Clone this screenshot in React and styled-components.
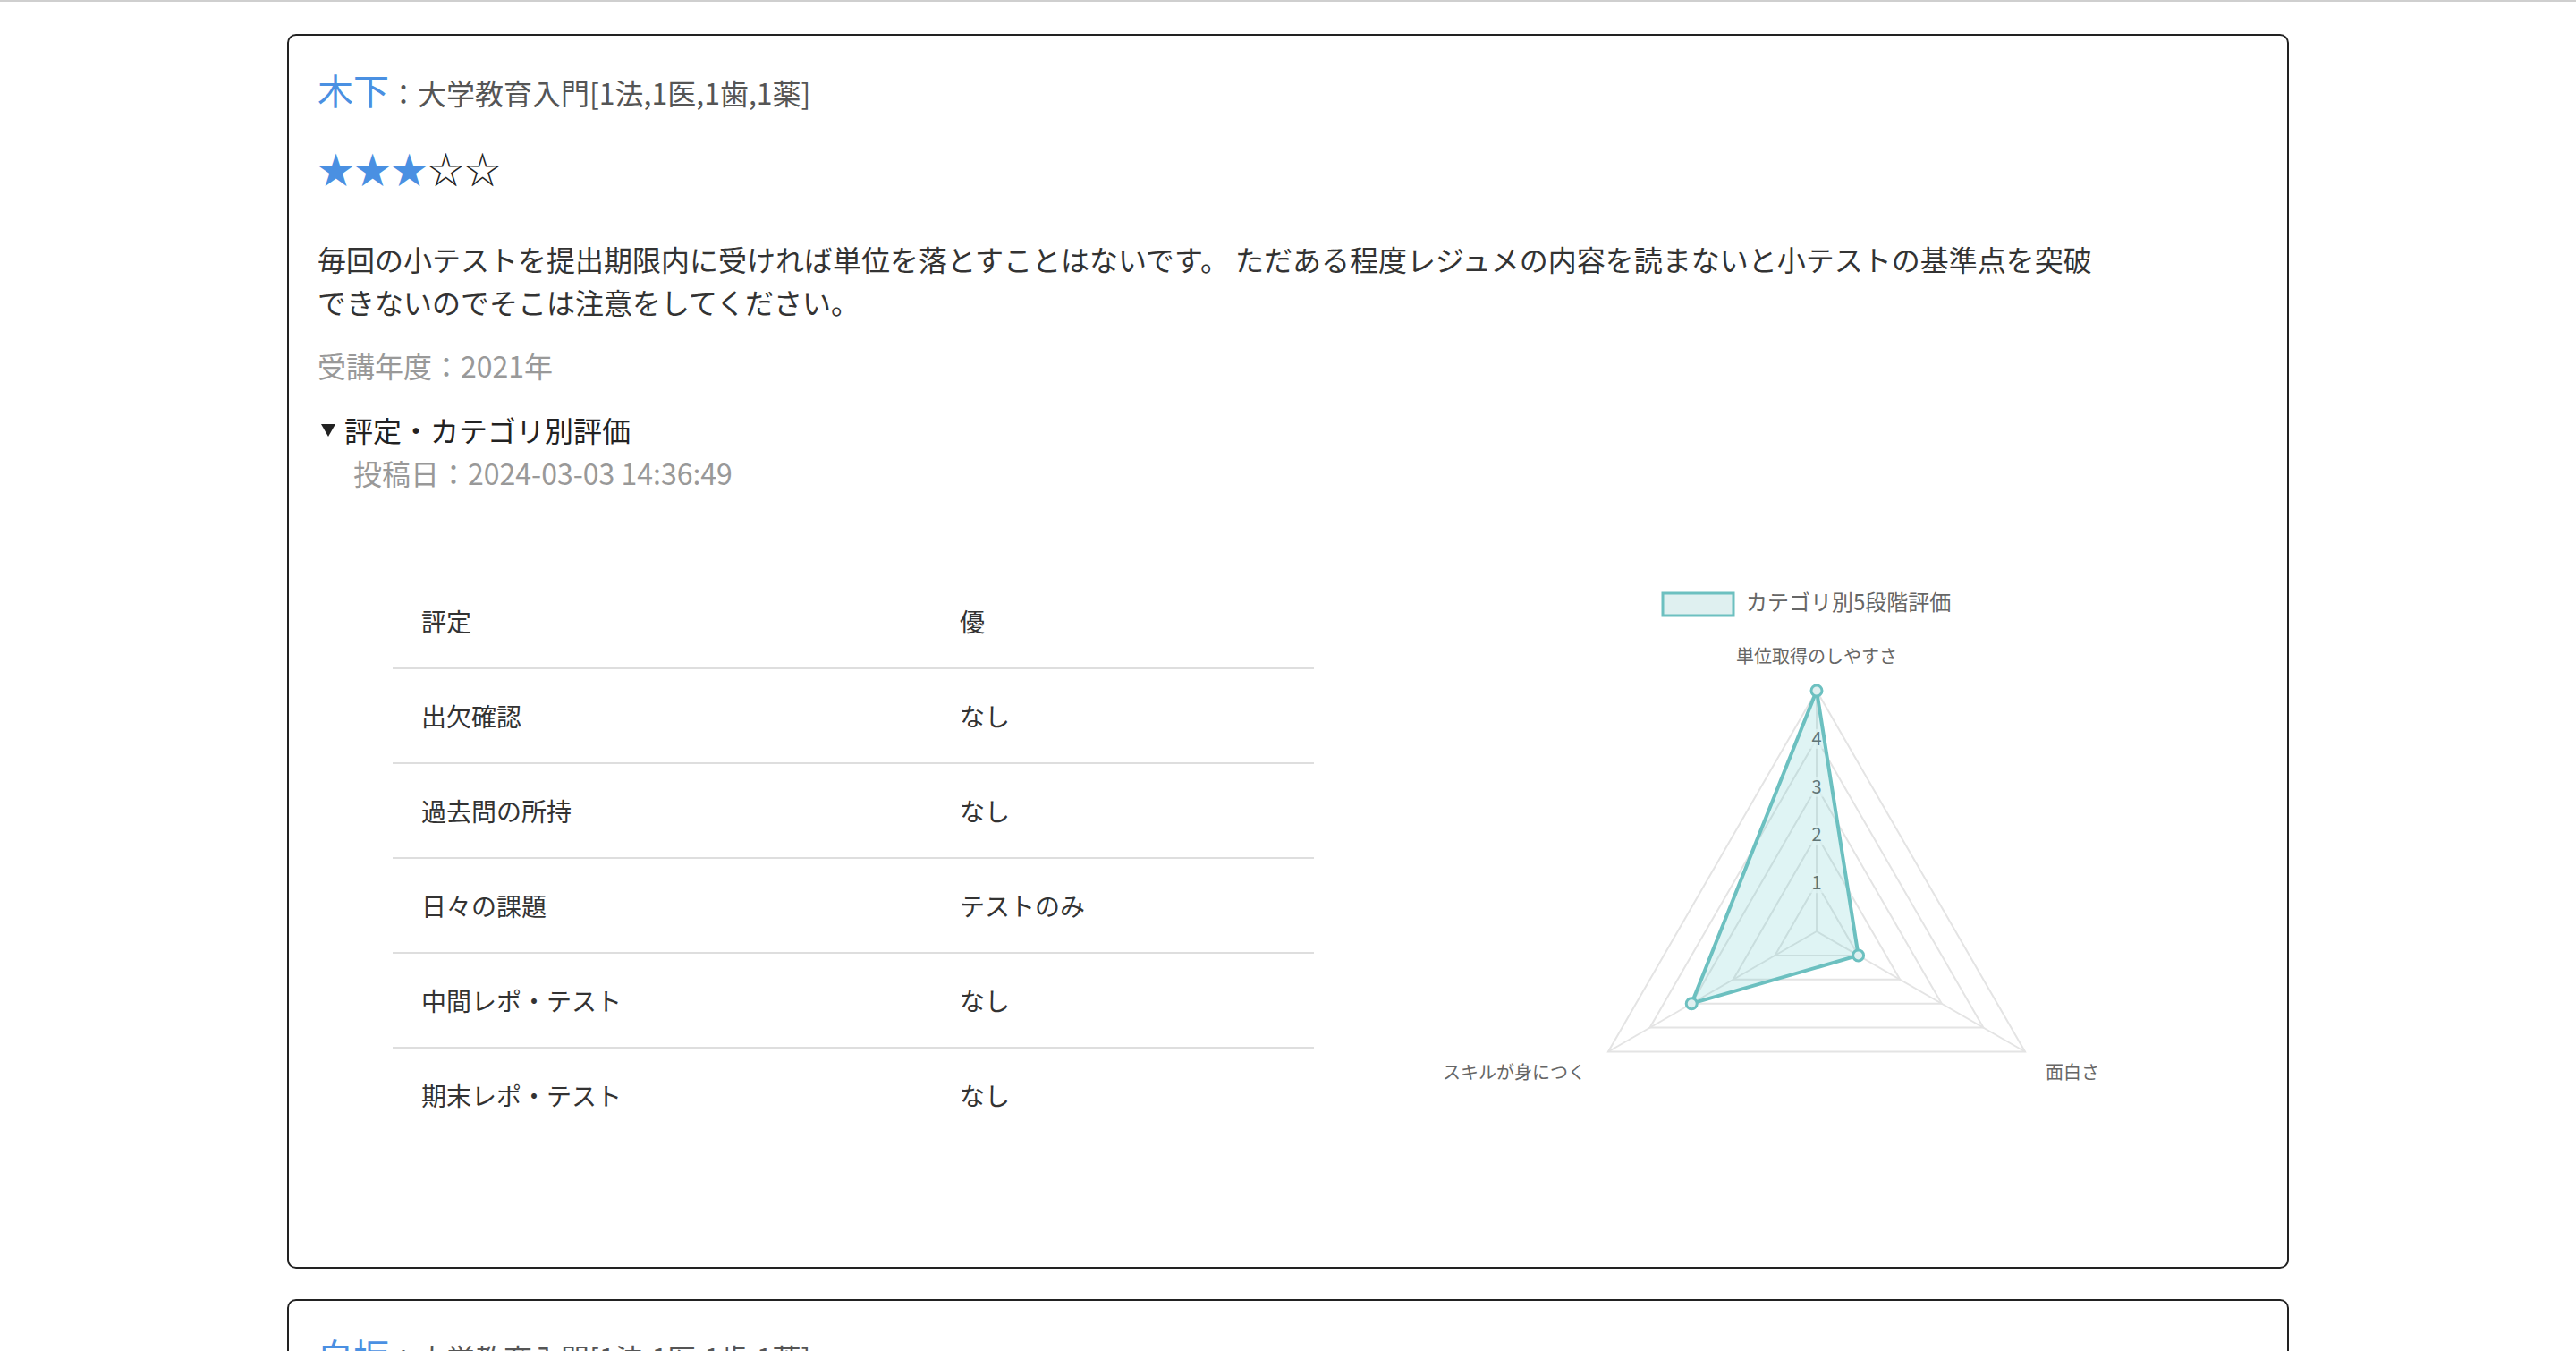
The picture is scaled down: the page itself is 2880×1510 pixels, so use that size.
import React from "react";
import styled, { createGlobalStyle } from "styled-components";

const GlobalStyle = createGlobalStyle`
  body {
    margin: 0;
    background: #fff;
    font-family: "Noto Sans CJK JP", "Noto Sans", sans-serif;
    color: #333;
  }
`;

const TopBar = styled.div`
  height: 2px;
  background: #cfcfcf;
`;

const List = styled.main`
  display: flex;
  flex-direction: column;
  gap: 34px;
  padding-top: 36px;
`;

const Card = styled.section`
  box-sizing: border-box;
  width: 2238px;
  margin: 0 auto;
  border: 2px solid #222;
  border-radius: 10px;
  padding: 28px 32px 32px;
`;

const Heading = styled.div`
  display: flex;
  align-items: baseline;
  line-height: 64px;
`;

const Author = styled.span`
  font-size: 40px;
  color: #4a90e2;
`;

const Course = styled.span`
  font-size: 32px;
  color: #555;
`;

const Stars = styled.div`
  margin-top: 22px;
  font-size: 41px;
  line-height: 60px;
`;

const Star = styled.span`
  color: ${(p) => (p.$on ? "#4a90e2" : "#222")};
`;

const Comment = styled.p`
  margin: 48px 0 0;
  max-width: 2000px;
  font-size: 32px;
  line-height: 48px;
  color: #333;
`;

const Meta = styled.div`
  margin-top: ${(p) => p.$top || 0}px;
  padding-left: ${(p) => p.$indent || 0}px;
  font-size: 32px;
  line-height: 48px;
  color: #999;
`;

const Details = styled.details`
  margin-top: 24px;
`;

const Summary = styled.summary`
  list-style: none;
  display: flex;
  align-items: center;
  font-size: 32px;
  line-height: 48px;
  color: #222;
  cursor: pointer;

  &::-webkit-details-marker {
    display: none;
  }
`;

const Caret = styled.span`
  width: 0;
  height: 0;
  margin: 2px 10px 0 4px;
  border-left: 8px solid transparent;
  border-right: 8px solid transparent;
  border-top: 14px solid #222;
`;

const DetailRow = styled.div`
  display: flex;
  align-items: flex-start;
  gap: 111px;
  margin: 90px 0 107px 84px;
`;

const Table = styled.table`
  width: 1030px;
  border-collapse: collapse;
  font-size: 28px;
  color: #333;
`;

const Row = styled.tr`
  & + & td {
    border-top: 2px solid #dedede;
  }
`;

const Cell = styled.td`
  padding: 31px 32px;
  line-height: 42px;
  width: ${(p) => p.$w || "auto"};
`;

const Chart = styled.svg`
  display: block;
  flex: none;
  font-family: "Noto Sans CJK JP", "Noto Sans", sans-serif;
`;

const rows = [
  ["評定", "優"],
  ["出欠確認", "なし"],
  ["過去問の所持", "なし"],
  ["日々の課題", "テストのみ"],
  ["中間レポ・テスト", "なし"],
  ["期末レポ・テスト", "なし"],
];

const CX = 451;
const CY = 399;
const R = 269;
const ANGLES = [-90, 30, 150];

function pt(angle, r) {
  const a = (angle * Math.PI) / 180;
  return [CX + r * Math.cos(a), CY + r * Math.sin(a)];
}

function poly(values) {
  return values
    .map((v, i) => pt(ANGLES[i], (R * v) / 5).map((n) => n.toFixed(1)).join(","))
    .join(" ");
}

function Radar({ data }) {
  const teal = "#6cc0c0";
  return (
    <Chart width="900" height="635" viewBox="0 0 900 635">
      <rect x="279" y="21" width="79" height="25" fill="#dff0f0" stroke={teal} strokeWidth="3" />
      <text x="372" y="40" fontSize="24" fill="#666">カテゴリ別5段階評価</text>

      {[1, 2, 3, 4, 5].map((k) => (
        <polygon key={k} points={poly([k, k, k])} fill="none" stroke="#e4e4e4" strokeWidth="2" />
      ))}
      {ANGLES.map((a) => {
        const [x, y] = pt(a, R);
        return <line key={a} x1={CX} y1={CY} x2={x} y2={y} stroke="#e4e4e4" strokeWidth="2" />;
      })}

      {[1, 2, 3, 4].map((k) => (
        <g key={k}>
          <rect x={CX - 9} y={CY - (R * k) / 5 - 11} width="18" height="22" fill="rgba(255,255,255,0.75)" />
          <text x={CX} y={CY - (R * k) / 5 + 7} fontSize="20" fill="#666" textAnchor="middle">{k}</text>
        </g>
      ))}

      <polygon points={poly(data)} fill="rgba(75,192,192,0.18)" stroke={teal} strokeWidth="4" strokeLinejoin="round" />
      {data.map((v, i) => {
        const [x, y] = pt(ANGLES[i], (R * v) / 5);
        return <circle key={i} cx={x} cy={y} r="6" fill="#dff0f0" stroke={teal} strokeWidth="3" />;
      })}

      <text x={CX} y="99" fontSize="20" fill="#666" textAnchor="middle">単位取得のしやすさ</text>
      <text x="707" y="564" fontSize="20" fill="#666" textAnchor="start">面白さ</text>
      <text x="193" y="564" fontSize="20" fill="#666" textAnchor="end">スキルが身につく</text>
    </Chart>
  );
}

function Review({ author, course, score, comment, year, posted, grades, radar }) {
  return (
    <Card>
      <Heading>
        <Author>{author}</Author>
        <Course>：{course}</Course>
      </Heading>
      <Stars>
        {[1, 2, 3, 4, 5].map((i) => (
          <Star key={i} $on={i <= score}>{i <= score ? "★" : "☆"}</Star>
        ))}
      </Stars>
      <Comment>{comment}</Comment>
      <Meta $top={23}>受講年度：{year}</Meta>
      <Details open>
        <Summary>
          <Caret />
          評定・カテゴリ別評価
        </Summary>
        <Meta $indent={40}>投稿日：{posted}</Meta>
        <DetailRow>
          <Table>
            <tbody>
              {grades.map(([k, v]) => (
                <Row key={k}>
                  <Cell $w="538px">{k}</Cell>
                  <Cell>{v}</Cell>
                </Row>
              ))}
            </tbody>
          </Table>
          <Radar data={radar} />
        </DetailRow>
      </Details>
    </Card>
  );
}

export default function App() {
  const comment =
    "毎回の小テストを提出期限内に受ければ単位を落とすことはないです。 ただある程度レジュメの内容を読まないと小テストの基準点を突破できないのでそこは注意をしてください。";
  return (
    <>
      <GlobalStyle />
      <TopBar />
      <List>
        <Review
          author="木下"
          course="大学教育入門[1法,1医,1歯,1薬]"
          score={3}
          comment={comment}
          year="2021年"
          posted="2024-03-03 14:36:49"
          grades={rows}
          radar={[5, 1, 3]}
        />
        <Review
          author="白坂"
          course="大学教育入門[1法,1医,1歯,1薬]"
          score={4}
          comment={comment}
          year="2021年"
          posted="2024-02-11 10:12:05"
          grades={rows}
          radar={[4, 3, 3]}
        />
      </List>
    </>
  );
}
